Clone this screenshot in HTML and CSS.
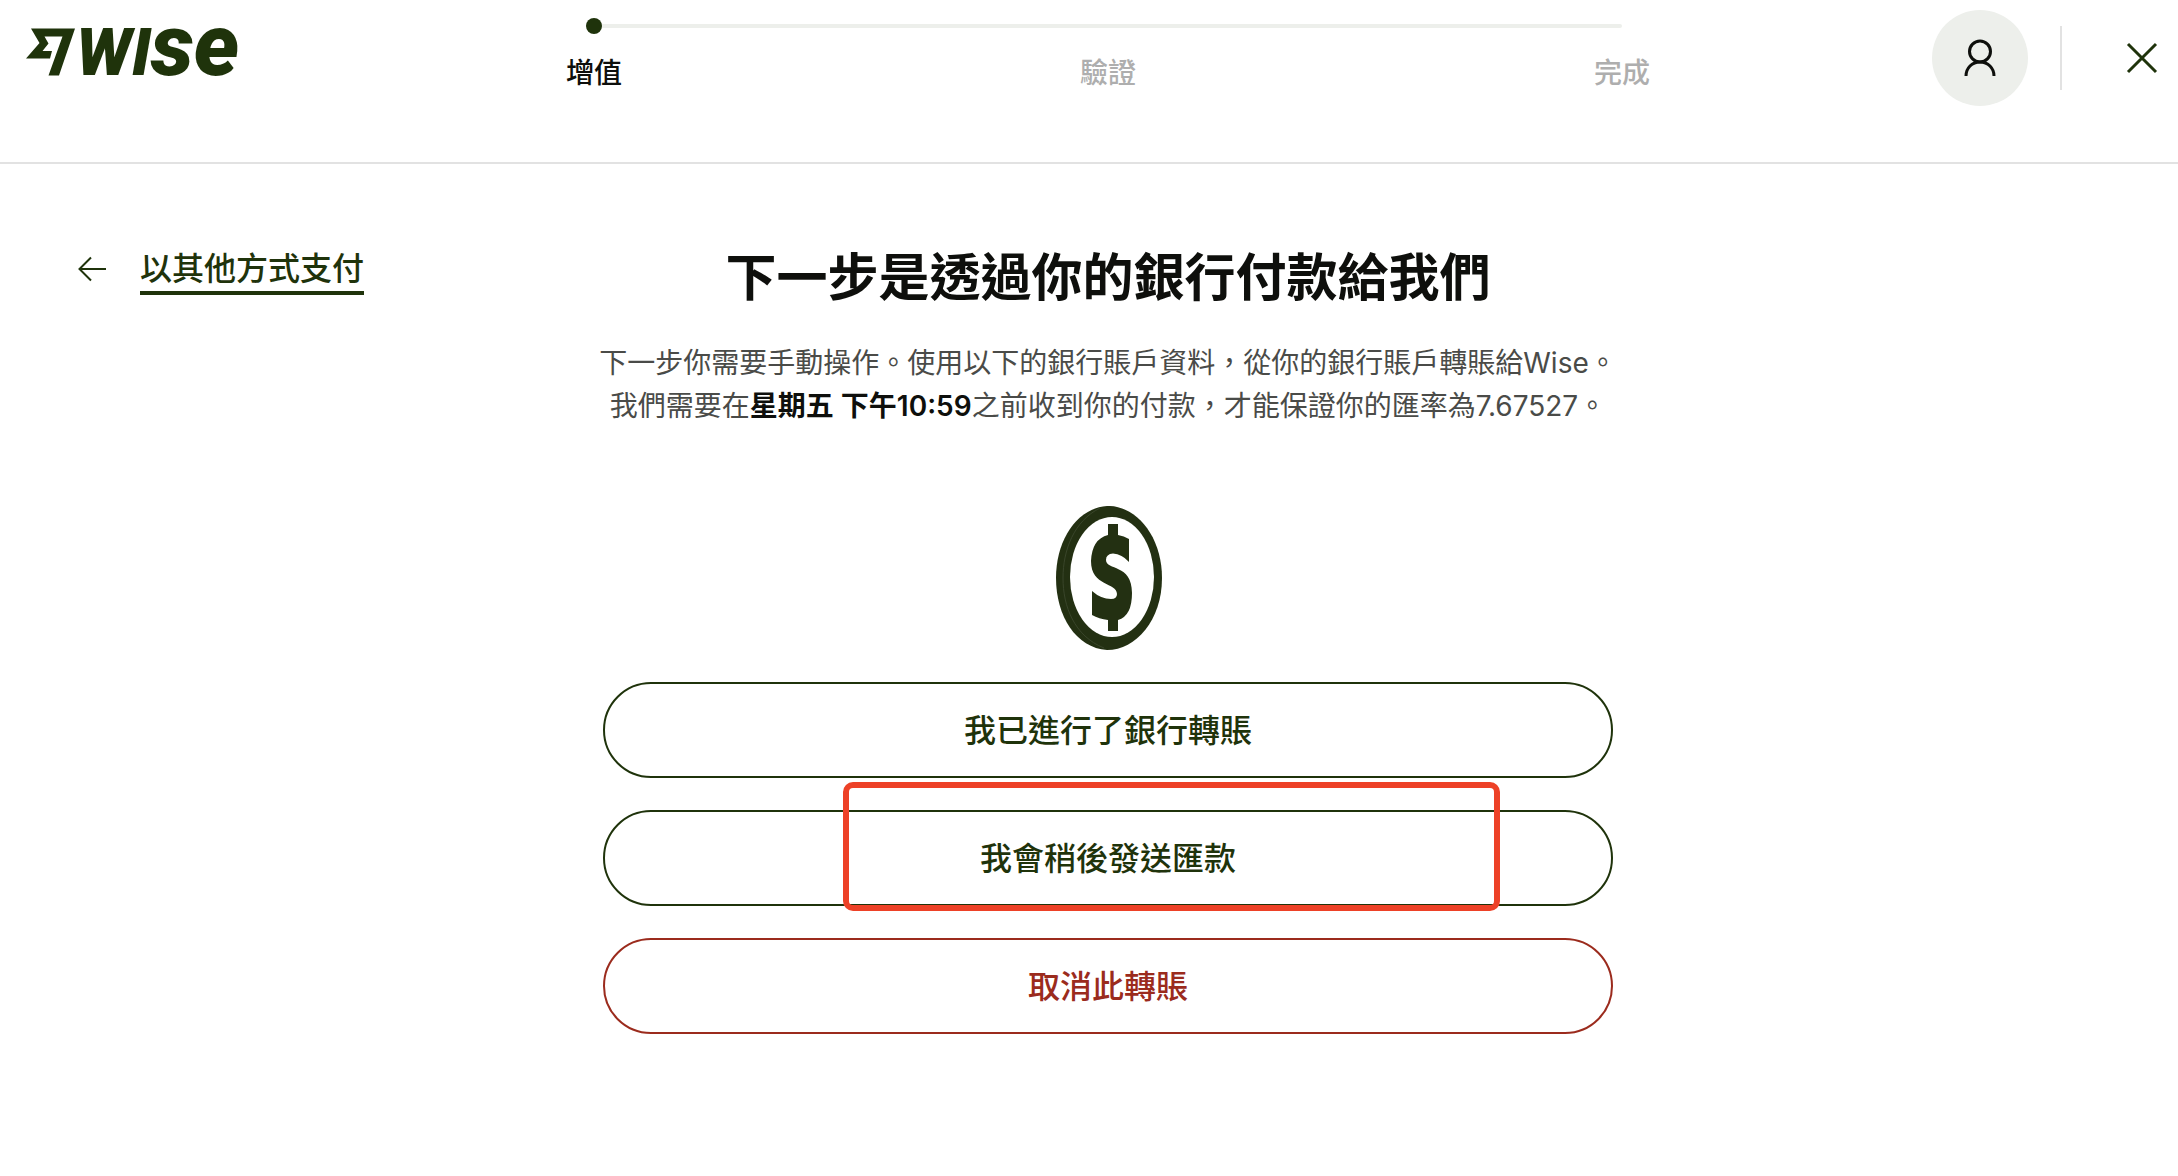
FILE: index.html
```html
<!DOCTYPE html>
<html lang="zh-Hant-HK">
<head>
  <meta charset="utf-8">
  <meta name="viewport" content="width=device-width, initial-scale=1">
  <title>Wise</title>
  <link rel="stylesheet" href="styles.css">
</head>
<body>
  <header class="topbar">
    <a class="logo" href="#">
      <svg class="logo-flag" width="50" height="48" viewBox="0 0 50 48" aria-hidden="true">
        <path d="M5 0.500H49L33 47.500H22.500L36.500 8.500H18.500L22.500 15.500L16.500 23H26L24 30.500H0L13.500 15Z"/>
      </svg>
      <span class="wordmark"><span class="wordmark-caps">WI</span><span class="wordmark-small">se</span></span>
    </a>
    <nav class="stepper">
      <div class="track"></div>
      <ol class="steps">
        <li class="step step-active">增值</li>
        <li class="step">驗證</li>
        <li class="step">完成</li>
      </ol>
    </nav>
    <div class="actions">
      <button class="avatar" type="button" aria-label="帳戶">
        <svg width="34" height="38" viewBox="0 0 34 38" fill="none" stroke="currentColor" stroke-width="3" aria-hidden="true">
          <circle cx="17" cy="12.500" r="10.500"/>
          <path d="M3 37C3 29 9 23 17 23S31 29 31 37"/>
        </svg>
      </button>
      <span class="divider"></span>
      <button class="close" type="button" aria-label="關閉">
        <svg width="32" height="32" viewBox="0 0 32 32" fill="none" stroke="currentColor" stroke-width="3" aria-hidden="true">
          <path d="M2 2L30 30M30 2L2 30"/>
        </svg>
      </button>
    </div>
  </header>

  <main class="page">
    <div class="back">
      <svg width="28" height="26" viewBox="0 0 28 26" fill="none" stroke="currentColor" stroke-width="2" aria-hidden="true">
        <path d="M28 13H1.500M13 1.500L1.500 13L13 24.500"/>
      </svg>
      <a class="back-link" href="#">以其他方式支付</a>
    </div>
    <section class="content">
      <h1 class="title">下一步是透過你的銀行付款給我們</h1>
      <p class="lead">下一步你需要手動操作。使用以下的銀行賬戶資料，從你的銀行賬戶轉賬給Wise。<br>我們需要在<strong>星期五 下午10:59</strong>之前收到你的付款，才能保證你的匯率為7.67527。</p>
      <svg class="coin" width="108" height="144" viewBox="0 0 108 144" aria-hidden="true">
        <path class="coin-ink" d="M53 0C82 -1 108 30 108 72S82 144 53 144C22 142 2 110 2 72S23 2 53 0Z"/>
        <path class="coin-edge" d="M46 2C20 15 9 44 9 72S20 130 50 142"/>
        <ellipse class="coin-face" cx="58" cy="71" rx="42" ry="60"/>
        <path class="coin-ink" d="M54 18H64V29Q70 30 75 33V56Q68 48 59 47.500Q52 48 52 54C52 65 78 57 78 87Q78 110 64 114V125H54V114Q45 113 38 109V85Q47 93 57 93Q63 93 63 88C63 76 37 81 37 55Q38 33 54 29Z"/>
      </svg>
      <div class="choices">
        <button class="choice" type="button">我已進行了銀行轉賬</button>
        <div class="marked">
          <button class="choice" type="button">我會稍後發送匯款</button>
          <span class="marker"></span>
        </div>
        <button class="choice choice-danger" type="button">取消此轉賬</button>
      </div>
    </section>
  </main>
</body>
</html>
```
FILE: styles.css
```css
* {
  box-sizing: border-box;
}

body {
  margin: 0;
  background: #fff;
  color: #0e0f0c;
  font-family: Inter, "Noto Sans CJK TC", sans-serif;
  font-size: 28px;
}

svg {
  display: block;
}

button {
  padding: 0;
  border: 0;
  background: none;
  font: inherit;
  cursor: pointer;
}

/* Header */

.topbar {
  display: grid;
  grid-template-columns: minmax(0, 594fr) minmax(0, 1028fr) minmax(0, 556fr);
  height: 164px;
  border-bottom: 2px solid #e2e2e2;
}

.logo {
  display: flex;
  align-items: flex-start;
  height: 76px;
  padding: 28px 0 0 26px;
  color: #1f330b;
  text-decoration: none;
}

.logo-flag {
  fill: currentColor;
}

.wordmark {
  display: flex;
  align-items: baseline;
  font-family: Roboto, sans-serif;
  font-weight: 900;
  font-style: italic;
  line-height: 36px;
}

.wordmark-caps {
  font-size: 66px;
}

.wordmark-small {
  font-size: 86px;
}

.stepper {
  padding-top: 24px;
}

.track {
  position: relative;
  height: 4px;
  border-radius: 2px;
  background: #edefeb;
}

.track::before {
  content: "";
  position: absolute;
  top: -6px;
  left: -8px;
  width: 16px;
  height: 16px;
  border-radius: 50%;
  background: #1f330b;
}

.steps {
  display: flex;
  justify-content: space-between;
  margin: 25px -28px 0;
  padding: 0;
  list-style: none;
}

.step {
  color: #aeaeae;
  font-weight: 500;
  line-height: 40px;
}

.step-active {
  color: #0e0f0c;
}

.actions {
  display: flex;
  align-items: center;
  justify-content: flex-end;
  height: 96px;
  margin-top: 10px;
  padding-right: 20px;
}

.avatar {
  display: grid;
  place-items: center;
  width: 96px;
  height: 96px;
  border-radius: 50%;
  background: #edefeb;
  color: #0e0f0c;
}

.divider {
  width: 2px;
  height: 64px;
  margin: 0 64px 0 32px;
  background: #e2e2e2;
}

.close {
  color: #1f330b;
}

/* Page */

.page {
  display: grid;
  grid-template-columns: minmax(0, 603fr) minmax(0, 1010fr) minmax(0, 565fr);
  padding-top: 82px;
}

.back {
  display: flex;
  align-items: center;
  gap: 34px;
  height: 46px;
  padding-left: 78px;
  color: #1f330b;
}

.back-link {
  padding-top: 4px;
  border-bottom: 4px solid currentColor;
  color: inherit;
  font-size: 32px;
  font-weight: 500;
  line-height: 44px;
  text-decoration: none;
  white-space: nowrap;
}

.content {
  display: flex;
  flex-direction: column;
  align-items: center;
}

.title {
  margin: 0;
  font-size: 51px;
  font-weight: 600;
  line-height: 64px;
  white-space: nowrap;
}

.lead {
  margin: 32px 0 0;
  color: #4a4b48;
  font-weight: 400;
  line-height: 43px;
  text-align: center;
  white-space: nowrap;
}

.lead strong {
  color: #0e0f0c;
  font-weight: 600;
}

.coin {
  margin: 78px 0 32px;
}

.coin-ink {
  fill: #233012;
}

.coin-edge {
  fill: none;
  stroke: #39452a;
  stroke-width: 1;
}

.coin-face {
  fill: #fff;
}

.choices {
  display: flex;
  flex-direction: column;
  gap: 32px;
  width: 100%;
}

.choice {
  display: block;
  width: 100%;
  height: 96px;
  padding-bottom: 4px;
  border: 2px solid #1f330b;
  border-radius: 48px;
  color: #1f330b;
  font-size: 32px;
  font-weight: 500;
}

.choice-danger {
  border-color: #9b2b1d;
  color: #9b2b1d;
}

.marked {
  position: relative;
}

.marker {
  position: absolute;
  top: -28px;
  right: 113px;
  bottom: -5px;
  left: 240px;
  border: 6px solid #ed4127;
  border-radius: 10px;
  pointer-events: none;
}
```
